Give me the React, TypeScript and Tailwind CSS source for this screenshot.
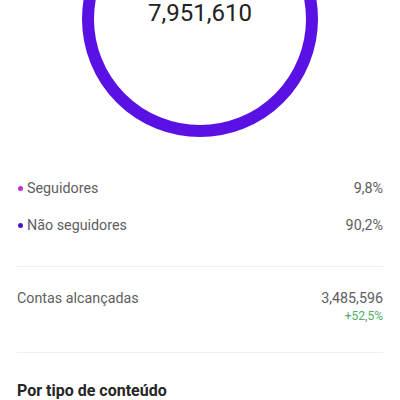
const ROWS = [
  { label: 'Seguidores', value: '9,8%', dot: 'bg-[#c52ad2]' },
  { label: 'Não seguidores', value: '90,2%', dot: 'bg-[#4a17c8]' },
]

export default function App() {
  return (
    <div className="w-[400px] h-[400px] overflow-hidden bg-white font-['Roboto','Liberation_Sans',sans-serif]">
      {/* ring chart, cropped at the top */}
      <div className="h-[140px] overflow-hidden">
        <div className="-mt-[99px] mx-auto w-[236px] h-[236px] rounded-full border-[12px] border-[#5a12e4] flex flex-col items-center pt-[86px]">
          <span className="text-[24px] leading-[28px] text-[#222222]">7,951,610</span>
        </div>
      </div>

      <div className="px-[17px]">
        <div className="pt-[30px] pb-[22px] border-b border-[#efefef]">
          {ROWS.map(row => (
            <div key={row.label} className="h-[37px] flex items-center justify-between text-[14.3px] text-[#5e5e5e]">
              <div className="flex items-center gap-[4px]">
                <span className={`w-[5px] h-[5px] rounded-full ml-[1px] ${row.dot}`} />
                <span>{row.label}</span>
              </div>
              <span>{row.value}</span>
            </div>
          ))}
        </div>

        <div className="pt-[21px] pb-[28px] border-b border-[#efefef] flex justify-between">
          <span className="text-[14.3px] leading-[20px] text-[#5e5e5e]">Contas alcançadas</span>
          <div className="flex flex-col items-end">
            <span className="text-[14.3px] leading-[20px] text-[#5e5e5e]">3,485,596</span>
            <span className="text-[12px] leading-[16px] text-[#4fae68]">+52,5%</span>
          </div>
        </div>

        <div className="pt-[27px] text-[16px] leading-[22px] font-bold text-[#262626]">
          Por tipo de conteúdo
        </div>
      </div>
    </div>
  )
}
